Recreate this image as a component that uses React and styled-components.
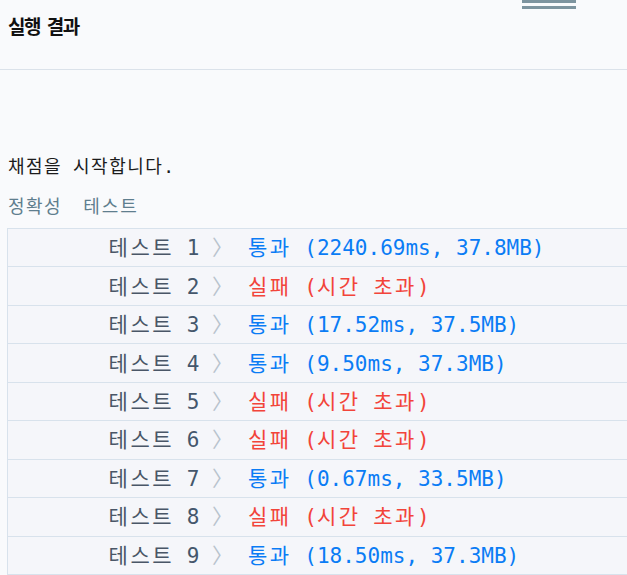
import React from 'react';
import styled, { createGlobalStyle } from 'styled-components';

const Global = createGlobalStyle`
  html, body { margin: 0; padding: 0; background: #f9fafc; overflow: hidden; }
  body { font-family: "Noto Sans CJK KR", sans-serif; }
`;

const Page = styled.div`
  position: relative;
  width: 627px;
  height: 575px;
  overflow: hidden;
  background: #f9fafc;
`;

const Handle = styled.div`
  position: absolute;
  left: 522px;
  top: 0;
  width: 54px;
  height: 9px;
  box-sizing: border-box;
  border-top: 3px solid #7d949f;
  border-bottom: 3px solid #7d949f;
`;

const Header = styled.div`
  height: 69px;
  border-bottom: 1px solid #dbe2ea;
  padding: 0 8px;
  display: flex;
  align-items: flex-start;
`;

const Title = styled.h2`
  margin: 13px 0 0;
  font-family: "Noto Sans CJK KR", sans-serif;
  font-size: 19px;
  font-weight: 700;
  line-height: 26px;
  letter-spacing: -1.5px;
  word-spacing: 4px;
  color: #111;
`;

const Output = styled.div`
  padding: 85px 0 0 8px;
  font-family: "DejaVu Sans Mono", "Noto Sans CJK KR", monospace;
`;

const Ko = styled.span`
  letter-spacing: ${(p) => p.$ls || 0}px;
`;

const Message = styled.div`
  font-size: 18px;
  line-height: 24px;
  color: #1c1c1c;
  white-space: pre;
`;

const Tabs = styled.div`
  margin-top: 16px;
  display: flex;
  gap: 21px;
  font-size: 18px;
  line-height: 24px;
  color: #5f7e8e;
`;

const Table = styled.div`
  margin: 9px 0 0 -1px;
  width: 660px;
  border-left: 1px solid #d8e2ec;
  border-bottom: 1px solid #d8e2ec;
  background: #f5f6fa;
`;

const Row = styled.div`
  height: 38.44px;
  box-sizing: border-box;
  padding-bottom: 3px;
  border-top: 1px solid #d8e2ec;
  display: flex;
  align-items: center;
  font-size: 21px;
  white-space: pre;
`;

const Label = styled.div`
  width: 225px;
  text-align: right;
  color: #4a5667;
`;

const Num = styled.span`
  color: #44576c;
`;

const Arrow = styled.span`
  color: #b8c3cd;
`;

const Result = styled.div`
  padding-left: 15px;
  color: ${(p) => (p.$pass ? '#0a7cf5' : '#f2443a')};
`;

const rows = [
  [true, '(2240.69ms, 37.8MB)'],
  [false],
  [true, '(17.52ms, 37.5MB)'],
  [true, '(9.50ms, 37.3MB)'],
  [false],
  [false],
  [true, '(0.67ms, 33.5MB)'],
  [false],
  [true, '(18.50ms, 37.3MB)'],
];

export default function App() {
  return (
    <Page>
      <Global />
      <Handle />
      <Header>
        <Title>실행 결과</Title>
      </Header>
      <Output>
        <Message>
          <Ko $ls={1.5}>채점을</Ko> <Ko $ls={1.5}>시작합니다</Ko>.
        </Message>
        <Tabs>
          <Ko $ls={1.5}>정확성</Ko>
          <Ko $ls={2}>테스트</Ko>
        </Tabs>
        <Table>
          {rows.map(([pass, detail], i) => (
            <Row key={i}>
              <Label>
                <Ko $ls={2.5}>테스트</Ko> <Num>{i + 1}</Num> <Arrow>〉</Arrow>
              </Label>
              {pass ? (
                <Result $pass>
                  <Ko $ls={2.5}>통과</Ko> {detail}
                </Result>
              ) : (
                <Result>
                  <Ko $ls={2.5}>실패</Ko> (<Ko $ls={2.5}>시간</Ko> <Ko $ls={2.5}>초과</Ko>)
                </Result>
              )}
            </Row>
          ))}
        </Table>
      </Output>
    </Page>
  );
}
